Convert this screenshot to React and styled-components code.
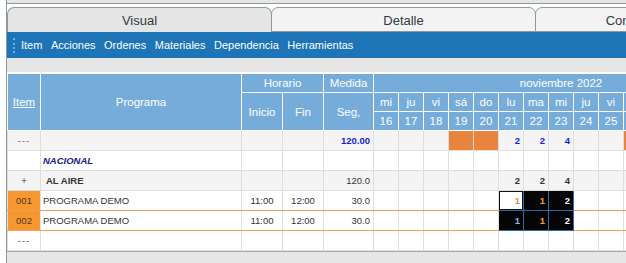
import React from 'react'
import styled, { createGlobalStyle } from 'styled-components'

const GlobalStyle = createGlobalStyle`
  html, body {
    margin: 0;
    padding: 0;
    background: #ffffff;
  }
  body {
    font-family: "Liberation Sans", Arial, sans-serif;
  }
`

const Page = styled.div`
  width: 626px;
  height: 263px;
  overflow: hidden;
  background: #ffffff;
`

const Frame = styled.div`
  margin-left: 6px;
  height: 100%;
  border-left: 1px solid #8c989e;
  display: flex;
  flex-direction: column;
  overflow: hidden;
`

const TopStrip = styled.div`
  height: 3px;
  flex: none;
  background: #e6e6e6;
  border-bottom: 1px solid #8c989e;
`

const TabBar = styled.div`
  display: flex;
  flex: none;
  padding-top: 3px;
  height: 25px;
  box-sizing: content-box;
  width: 900px;
`

const Tab = styled.div`
  width: ${p => p.$width}px;
  flex: none;
  box-sizing: border-box;
  height: 25px;
  padding-top: 1px;
  border: 1px solid #8c989e;
  border-bottom: ${p => (p.$active ? 'none' : '1px solid #8c989e')};
  border-radius: 7px 7px 0 0;
  background: ${p => (p.$active ? '#e5e5e5' : '#f3f3f3')};
  color: #333a40;
  font-size: 13px;
  display: flex;
  align-items: center;
  justify-content: center;
  margin-right: -1px;
`

const MenuBar = styled.div`
  flex: none;
  height: 26px;
  background: #1d74b7;
  display: flex;
  align-items: center;
  padding-left: 6px;
`

const Grip = styled.div`
  width: 0;
  height: 15px;
  border-left: 2px dotted #79aede;
  margin-right: 6px;
`

const MenuItem = styled.span`
  color: #ffffff;
  font-size: 11px;
  margin-right: 8.5px;
`

const GrayStrip = styled.div`
  flex: none;
  height: 14px;
  background: #e6e6e6;
  border-bottom: 1px solid #ffffff;
`

const GridWrap = styled.div`
  flex: none;
  overflow: hidden;
`

const Grid = styled.table`
  border-collapse: collapse;
  table-layout: fixed;
  width: 741px;
  font-size: 9.5px;
`

const Head = styled.th`
  background: #76acd9;
  color: #ffffff;
  font-weight: normal;
  font-size: 11.5px;
  border: 1px solid #ffffff;
  height: ${p => (p.$tall ? 37 : 18)}px;
  padding: 0;
  text-align: center;
  white-space: nowrap;
  overflow: visible;
  text-decoration: ${p => (p.$link ? 'underline' : 'none')};
`

const Row = styled.tr`
  background: ${p => (p.$shade ? '#f4f4f4' : '#ffffff')};
  height: 20px;
`

const Cell = styled.td`
  border: 1px solid #dedede;
  border-top: ${p => (p.$first ? '1px solid #9a9a9a' : p.$orange ? '1px solid #f0a050' : '1px solid #dedede')};
  border-bottom: ${p => (p.$orange ? '1px solid #f0a050' : '1px solid #dedede')};
  padding: 0 ${p => (p.$right ? 3 : 2)}px;
  text-align: ${p => p.$align || 'left'};
  color: ${p => p.$color || '#333333'};
  font-weight: ${p => (p.$bold ? 'bold' : 'normal')};
  font-style: ${p => (p.$italic ? 'italic' : 'normal')};
  background: ${p => p.$bg || 'transparent'};
  white-space: nowrap;
  overflow: hidden;
  vertical-align: middle;
`

const ItemCell = styled(Cell)`
  text-align: center;
  letter-spacing: ${p => (p.$dots ? '1px' : '0')};
`

const MarkCell = styled.td`
  border: 1px solid #2a6cad;
  background: ${p => (p.$light ? '#ffffff' : '#050505')};
  box-shadow: ${p => (p.$light ? 'inset 0 0 0 1px #111111' : 'none')};
  color: ${p => p.$color};
  text-align: right;
  padding: 0 3px;
  font-weight: bold;
`

const Bottom = styled.div`
  flex: 1;
  background: #e6e6e6;
  border-top: 1px solid #a8a8a8;
`

const days = [
  ['mi', 16], ['ju', 17], ['vi', 18], ['sá', 19], ['do', 20],
  ['lu', 21], ['ma', 22], ['mi', 23], ['ju', 24], ['vi', 25],
  ['sá', 26], ['do', 27], ['lu', 28], ['ma', 29], ['mi', 30],
]

const isWeekend = d => d[0] === 'sá' || d[0] === 'do'

const totals = { 21: '2', 22: '2', 23: '4' }

const programs = [
  { item: '001', marks: [['1', '#d98a3c', true], ['1', '#f0a040'], ['2', '#ffffff']] },
  { item: '002', marks: [['1', '#8fb8e8'], ['1', '#f0a040'], ['2', '#ffffff']] },
]

function DayCells({ values = {}, color, weekendFill, first }) {
  return days.map(d => (
    <Cell
      key={d[1]}
      $first={first}
      $align="right"
      $right
      $bold
      $color={color}
      $bg={weekendFill && isWeekend(d) ? '#e8843c' : undefined}
    >
      {values[d[1]] || ''}
    </Cell>
  ))
}

export default function App() {
  return (
    <Page>
      <GlobalStyle />
      <Frame>
        <TopStrip />
        <TabBar>
          <Tab $active $width={265}>Visual</Tab>
          <Tab $width={265}>Detalle</Tab>
          <Tab $width={265}>Control de Emisiones</Tab>
        </TabBar>
        <MenuBar>
          <Grip />
          {['Item', 'Acciones', 'Ordenes', 'Materiales', 'Dependencia', 'Herramientas'].map(m => (
            <MenuItem key={m}>{m}</MenuItem>
          ))}
        </MenuBar>
        <GrayStrip />
        <GridWrap>
          <Grid>
            <colgroup>
              <col style={{ width: 33 }} />
              <col style={{ width: 201 }} />
              <col style={{ width: 41 }} />
              <col style={{ width: 41 }} />
              <col style={{ width: 50 }} />
              {days.map(d => <col key={d[1]} style={{ width: 25 }} />)}
            </colgroup>
            <thead>
              <tr>
                <Head rowSpan={3} $link>Item</Head>
                <Head rowSpan={3}>Programa</Head>
                <Head colSpan={2}>Horario</Head>
                <Head>Medida</Head>
                <Head colSpan={15}>noviembre 2022</Head>
              </tr>
              <tr>
                <Head rowSpan={2} $tall>Inicio</Head>
                <Head rowSpan={2} $tall>Fin</Head>
                <Head rowSpan={2} $tall>Seg,</Head>
                {days.map(d => <Head key={d[1]}>{d[0]}</Head>)}
              </tr>
              <tr>
                {days.map(d => <Head key={d[1]}>{d[1]}</Head>)}
              </tr>
            </thead>
            <tbody>
              <Row $shade>
                <ItemCell $first $dots $color="#b0502a">---</ItemCell>
                <Cell $first />
                <Cell $first />
                <Cell $first />
                <Cell $first $align="right" $right $bold $color="#1a1ad8">120.00</Cell>
                <DayCells first values={totals} color="#1a1ad8" weekendFill />
              </Row>
              <Row>
                <ItemCell />
                <Cell $bold $italic $color="#1c1c80">NACIONAL</Cell>
                <Cell />
                <Cell />
                <Cell />
                <DayCells />
              </Row>
              <Row $shade>
                <ItemCell>+</ItemCell>
                <Cell $bold style={{ paddingLeft: 5 }}>AL AIRE</Cell>
                <Cell />
                <Cell />
                <Cell $align="right" $right>120.0</Cell>
                <DayCells values={totals} color="#333333" />
              </Row>
              {programs.map(p => (
                <Row key={p.item}>
                  <ItemCell $orange $bg="#f7972f" $color="#4a3a2a">{p.item}</ItemCell>
                  <Cell $orange>PROGRAMA DEMO</Cell>
                  <Cell $orange $align="center">11:00</Cell>
                  <Cell $orange $align="center">12:00</Cell>
                  <Cell $orange $align="right" $right>30.0</Cell>
                  {days.map(d => {
                    const idx = d[1] - 21
                    if (idx >= 0 && idx < 3) {
                      const [v, c, light] = p.marks[idx]
                      return <MarkCell key={d[1]} $color={c} $light={light}>{v}</MarkCell>
                    }
                    return <Cell key={d[1]} $orange />
                  })}
                </Row>
              ))}
              <Row>
                <ItemCell $dots $color="#555555">---</ItemCell>
                <Cell />
                <Cell />
                <Cell />
                <Cell />
                <DayCells />
              </Row>
            </tbody>
          </Grid>
        </GridWrap>
        <Bottom />
      </Frame>
    </Page>
  )
}
